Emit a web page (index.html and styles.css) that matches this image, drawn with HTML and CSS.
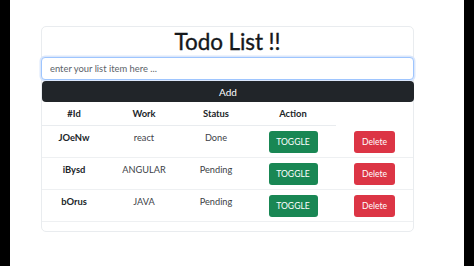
FILE: index.html
```html
<!DOCTYPE html>
<html lang="en">
<head>
<meta charset="utf-8">
<title>Todo List</title>
<link rel="stylesheet" href="styles.css">
</head>
<body>
<div class="page">
  <div class="card">
    <h1 class="title">Todo List !!</h1>
    <input class="entry" type="text" placeholder="enter your list item here ...">
    <button class="add">Add</button>
    <table class="list">
      <colgroup>
        <col class="c1"><col class="c2"><col class="c3"><col class="c4"><col class="c5">
      </colgroup>
      <thead>
        <tr><th>#Id</th><th>Work</th><th>Status</th><th>Action</th></tr>
      </thead>
      <tbody>
        <tr><td class="id">JOeNw</td><td>react</td><td>Done</td><td><button class="btn toggle">TOGGLE</button></td><td><button class="btn delete">Delete</button></td></tr>
        <tr><td class="id">iBysd</td><td>ANGULAR</td><td>Pending</td><td><button class="btn toggle">TOGGLE</button></td><td><button class="btn delete">Delete</button></td></tr>
        <tr><td class="id">bOrus</td><td>JAVA</td><td>Pending</td><td><button class="btn toggle">TOGGLE</button></td><td><button class="btn delete">Delete</button></td></tr>
      </tbody>
    </table>
  </div>
</div>
</body>
</html>
```
FILE: styles.css
```css
html, body {
  margin: 0;
  padding: 0;
  background: #000;
  height: 266px;
  overflow: hidden;
}
body {
  font-family: "Lato", "Noto Sans", sans-serif;
  color: #212529;
}
.page {
  margin: 0 10px;
  height: 266px;
  background: #fff;
  padding-top: 26px;
  box-sizing: border-box;
}
.card {
  margin-left: 31px;
  width: 373px;
  border: 1px solid #e9ecef;
  border-radius: 5px;
  box-sizing: border-box;
  padding-bottom: 9px;
}
.title {
  margin: 0;
  height: 30px;
  line-height: 30px;
  font-size: 22.5px;
  font-weight: 400;
  letter-spacing: -0.1px;
  text-align: center;
  color: #15181b;
  -webkit-text-stroke: 0.35px #15181b;
}
.entry {
  display: block;
  width: 373px;
  margin-left: -1px;
  height: 23px;
  box-sizing: border-box;
  border: 1px solid #9ec5fe;
  border-radius: 4px;
  box-shadow: 0 0 0 1.5px #dbe7fb;
  padding: 0 8px;
  font-family: inherit;
  font-size: 9.4px;
  color: #212529;
  outline: none;
}
.entry::placeholder {
  color: #5c636a;
}
.add {
  display: block;
  width: 372px;
  height: 21px;
  margin: 1px 0 0 0;
  border: 0;
  border-radius: 4px;
  background: #212529;
  color: #fff;
  font-family: inherit;
  font-size: 10px;
}
.list {
  width: 100%;
  border-collapse: collapse;
  table-layout: fixed;
  font-size: 9.2px;
}
.c1 { width: 64px; }
.c2 { width: 76px; }
.c3 { width: 68px; }
.c4 { width: 86px; }
.c5 { width: auto; }
.list th {
  height: 23px;
  padding: 0;
  font-size: 9.4px;
  font-weight: 700;
  border-bottom: 1px solid #e9ecef;
  text-align: center;
  vertical-align: middle;
}
.list td {
  padding: 5px 0 4px 0;
  height: 22px;
  text-align: center;
  vertical-align: top;
  line-height: 14px;
  border-bottom: 1px solid #eef0f2;
  color: #3d4247;
}
.list td.id {
  font-size: 9.4px;
  font-weight: 700;
  color: #212529;
}
.btn {
  height: 22px;
  border: 0;
  border-radius: 3px;
  color: #fff;
  font-family: inherit;
  font-size: 8.6px;
  padding: 0;
}
.toggle {
  width: 49px;
  background: #198754;
}
.delete {
  width: 41px;
  background: #dc3545;
}
```
